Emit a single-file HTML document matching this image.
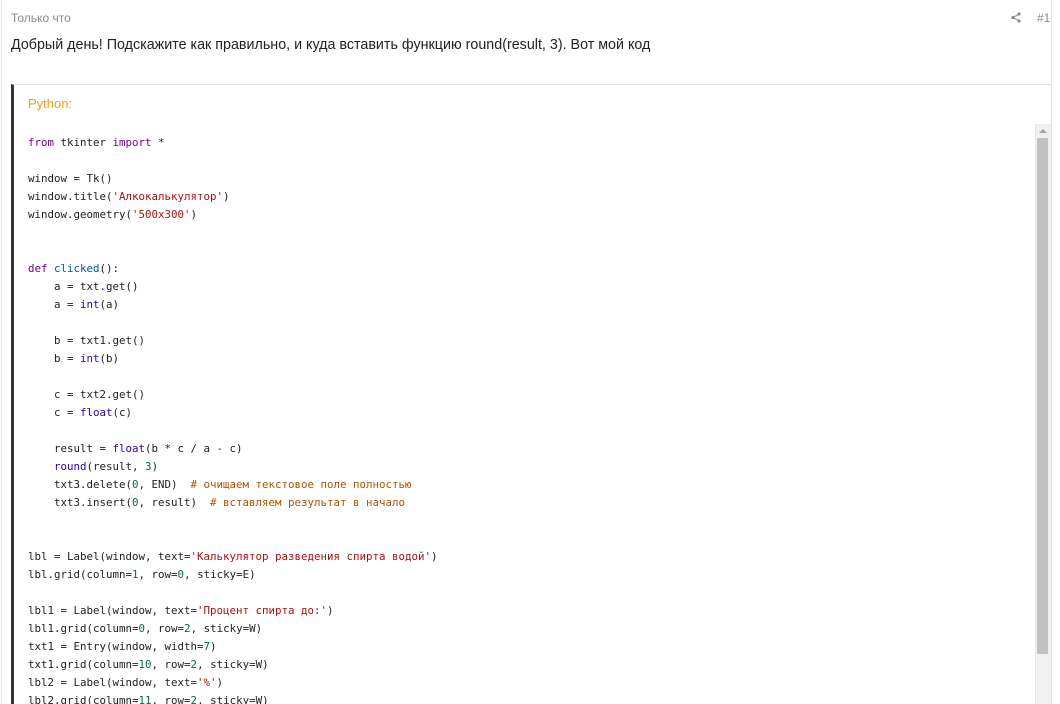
<!DOCTYPE html>
<html style="overflow:hidden;height:704px"><head><meta charset="utf-8"><style>
body{margin:0;width:1060px;height:704px;overflow:hidden;background:#fff;font-family:"Liberation Sans",sans-serif;position:relative}
.outer{position:absolute;left:1px;top:0;width:1051px;height:704px;border-left:1px solid #e5e5e5;border-right:1px solid #e5e5e5;box-sizing:border-box}
.time{position:absolute;left:11px;top:11px;font-size:12px;color:#8a8a8a}
.num{position:absolute;left:1037px;top:11px;font-size:12px;color:#8a8a8a}
.share{position:absolute;left:1011px;top:12px}
.msg{position:absolute;left:11px;top:37px;font-size:14.3px;color:#222}
.block{position:absolute;left:11px;top:84px;width:1037px;height:620px;border-left:3px solid #333;border-top:1px solid #e2e2e2;border-right:1px solid #e2e2e2}
.lang{position:absolute;left:28px;top:96px;font-size:13px;color:#e8a317}
.code{position:absolute;left:28px;top:134px;font-family:"DejaVu Sans Mono",monospace;font-size:10.8px;line-height:18px;color:#222;white-space:pre;margin:0}
.k{color:#770088}.b{color:#3300aa}.d{color:#0055aa}.s{color:#aa1111}.n{color:#116644}.c{color:#aa5500}
.track{position:absolute;left:1035px;top:124px;width:15px;height:580px;background:#f0f0f0;border-left:1px solid #e6e6e6}
.thumb{position:absolute;left:1037px;top:138px;width:11px;height:516px;background:#c1c1c1}
.arrow{position:absolute;left:1039px;top:129px;width:0;height:0;border-left:4px solid transparent;border-right:4px solid transparent;border-bottom:4px solid #a3a3a3}
</style></head><body>
<div class="outer"></div>
<div class="time">Только что</div>
<svg class="share" width="10" height="11" viewBox="0 0 10 11"><circle cx="8" cy="2" r="1.6" fill="#888"/><circle cx="2" cy="5.5" r="1.6" fill="#888"/><circle cx="8" cy="9" r="1.6" fill="#888"/><path d="M8 2L2 5.5L8 9" stroke="#888" stroke-width="1" fill="none"/></svg>
<div class="num">#1</div>
<div class="msg">Добрый день! Подскажите как правильно, и куда вставить функцию round(result, 3). Вот мой код</div>
<div class="block"></div>
<div class="lang">Python:</div>
<pre class="code"><span class="k">from</span> tkinter <span class="k">import</span> *

window = Tk()
window.title(<span class="s">'Алкокалькулятор'</span>)
window.geometry(<span class="s">'500x300'</span>)


<span class="k">def</span> <span class="d">clicked</span>():
    a = txt.get()
    a = <span class="b">int</span>(a)

    b = txt1.get()
    b = <span class="b">int</span>(b)

    c = txt2.get()
    c = <span class="b">float</span>(c)

    result = <span class="b">float</span>(b * c / a - c)
    <span class="b">round</span>(result, <span class="n">3</span>)
    txt3.delete(<span class="n">0</span>, END)  <span class="c"># очищаем текстовое поле полностью</span>
    txt3.insert(<span class="n">0</span>, result)  <span class="c"># вставляем результат в начало</span>


lbl = Label(window, text=<span class="s">'Калькулятор разведения спирта водой'</span>)
lbl.grid(column=<span class="n">1</span>, row=<span class="n">0</span>, sticky=E)

lbl1 = Label(window, text=<span class="s">'Процент спирта до:'</span>)
lbl1.grid(column=<span class="n">0</span>, row=<span class="n">2</span>, sticky=W)
txt1 = Entry(window, width=<span class="n">7</span>)
txt1.grid(column=<span class="n">10</span>, row=<span class="n">2</span>, sticky=W)
lbl2 = Label(window, text=<span class="s">'%'</span>)
lbl2.grid(column=<span class="n">11</span>, row=<span class="n">2</span>, sticky=W)</pre>
<div class="track"></div>
<div class="arrow"></div>
<div class="thumb"></div>
</body></html>
